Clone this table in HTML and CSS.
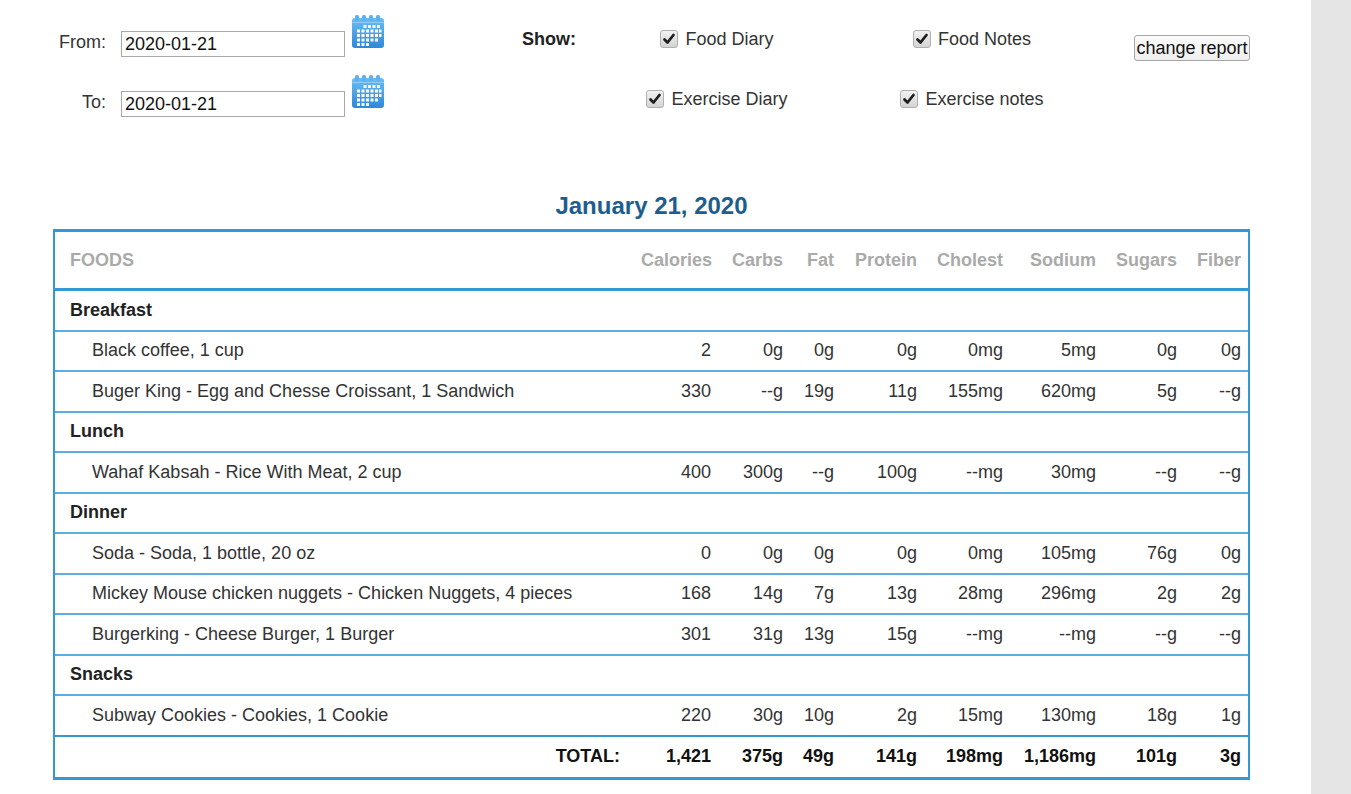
FILE: index.html
```html
<!DOCTYPE html>
<html>
<head>
<meta charset="utf-8">
<title>Food Report</title>
<link rel="stylesheet" href="styles.css">
</head>
<body>
<div class="page">
  <main class="main">
    <form class="filters">
      <label class="lbl">From:</label>
      <div class="datecell">
        <input class="date" type="text" value="2020-01-21">
        <svg class="cal" viewBox="0 0 34 35" width="34" height="35">
          <defs>
            <linearGradient id="cg" x1="0" y1="0" x2="0" y2="1">
              <stop offset="0" stop-color="#6cbdf3"/>
              <stop offset="1" stop-color="#2d88d8"/>
            </linearGradient>
          </defs>
          <rect x="1" y="4" width="32" height="30" rx="3" fill="url(#cg)"/>
          <rect x="4" y="1" width="4" height="6" rx="1.5" fill="#5cb1ee"/>
          <rect x="11" y="1" width="4" height="6" rx="1.5" fill="#5cb1ee"/>
          <rect x="18" y="1" width="4" height="6" rx="1.5" fill="#5cb1ee"/>
          <rect x="25" y="1" width="4" height="6" rx="1.5" fill="#5cb1ee"/>
          <rect x="1" y="8" width="32" height="1" fill="#8fcdf6"/>
          <g fill="#ffffff">
            <rect x="17" y="11" width="3" height="3"/><rect x="21.5" y="11" width="3" height="3"/><rect x="26" y="11" width="3" height="3"/><rect x="12.5" y="11" width="3" height="3"/>
            <rect x="6" y="15.5" width="3" height="3"/><rect x="10.5" y="15.5" width="3" height="3"/><rect x="15" y="15.5" width="3" height="3"/><rect x="19.5" y="15.5" width="3" height="3"/><rect x="24" y="15.5" width="3" height="3"/><rect x="28" y="15.5" width="2.5" height="3"/>
            <rect x="6" y="20" width="3" height="3"/><rect x="10.5" y="20" width="3" height="3"/><rect x="15" y="20" width="3" height="3"/><rect x="19.5" y="20" width="3" height="3"/><rect x="24" y="20" width="3" height="3"/><rect x="28" y="20" width="2.5" height="3"/>
            <rect x="6" y="24.5" width="3" height="3"/><rect x="10.5" y="24.5" width="3" height="3"/><rect x="15" y="24.5" width="3" height="3"/><rect x="19.5" y="24.5" width="3" height="3"/><rect x="24" y="24.5" width="3" height="3"/>
            <rect x="6" y="29" width="3" height="3"/><rect x="10.5" y="29" width="3" height="3"/><rect x="15" y="29" width="3" height="3"/>
          </g>
        </svg>
      </div>
      <div class="show">Show:</div>
      <div class="chk"><span class="box"><svg viewBox="0 0 18 18" width="18" height="18"><path d="M4.5 9.5 L7.5 12.5 L13.5 5" fill="none" stroke="#1e1e1e" stroke-width="2.8" stroke-linecap="round" stroke-linejoin="round"/></svg></span>Food Diary</div>
      <div class="chk"><span class="box"><svg viewBox="0 0 18 18" width="18" height="18"><path d="M4.5 9.5 L7.5 12.5 L13.5 5" fill="none" stroke="#1e1e1e" stroke-width="2.8" stroke-linecap="round" stroke-linejoin="round"/></svg></span>Food Notes</div>
      <div class="btncell"><button type="button" class="btn">change report</button></div>

      <label class="lbl">To:</label>
      <div class="datecell">
        <input class="date" type="text" value="2020-01-21">
        <svg class="cal" viewBox="0 0 34 35" width="34" height="35">
          <rect x="1" y="4" width="32" height="30" rx="3" fill="url(#cg)"/>
          <rect x="4" y="1" width="4" height="6" rx="1.5" fill="#5cb1ee"/>
          <rect x="11" y="1" width="4" height="6" rx="1.5" fill="#5cb1ee"/>
          <rect x="18" y="1" width="4" height="6" rx="1.5" fill="#5cb1ee"/>
          <rect x="25" y="1" width="4" height="6" rx="1.5" fill="#5cb1ee"/>
          <rect x="1" y="8" width="32" height="1" fill="#8fcdf6"/>
          <g fill="#ffffff">
            <rect x="17" y="11" width="3" height="3"/><rect x="21.5" y="11" width="3" height="3"/><rect x="26" y="11" width="3" height="3"/><rect x="12.5" y="11" width="3" height="3"/>
            <rect x="6" y="15.5" width="3" height="3"/><rect x="10.5" y="15.5" width="3" height="3"/><rect x="15" y="15.5" width="3" height="3"/><rect x="19.5" y="15.5" width="3" height="3"/><rect x="24" y="15.5" width="3" height="3"/><rect x="28" y="15.5" width="2.5" height="3"/>
            <rect x="6" y="20" width="3" height="3"/><rect x="10.5" y="20" width="3" height="3"/><rect x="15" y="20" width="3" height="3"/><rect x="19.5" y="20" width="3" height="3"/><rect x="24" y="20" width="3" height="3"/><rect x="28" y="20" width="2.5" height="3"/>
            <rect x="6" y="24.5" width="3" height="3"/><rect x="10.5" y="24.5" width="3" height="3"/><rect x="15" y="24.5" width="3" height="3"/><rect x="19.5" y="24.5" width="3" height="3"/><rect x="24" y="24.5" width="3" height="3"/>
            <rect x="6" y="29" width="3" height="3"/><rect x="10.5" y="29" width="3" height="3"/><rect x="15" y="29" width="3" height="3"/>
          </g>
        </svg>
      </div>
      <div class="show"></div>
      <div class="chk"><span class="box"><svg viewBox="0 0 18 18" width="18" height="18"><path d="M4.5 9.5 L7.5 12.5 L13.5 5" fill="none" stroke="#1e1e1e" stroke-width="2.8" stroke-linecap="round" stroke-linejoin="round"/></svg></span>Exercise Diary</div>
      <div class="chk"><span class="box"><svg viewBox="0 0 18 18" width="18" height="18"><path d="M4.5 9.5 L7.5 12.5 L13.5 5" fill="none" stroke="#1e1e1e" stroke-width="2.8" stroke-linecap="round" stroke-linejoin="round"/></svg></span>Exercise notes</div>
      <div class="btncell"></div>
    </form>

    <section class="report">
      <h2 class="date-title">January 21, 2020</h2>
      <table class="foods">
        <colgroup>
          <col class="c-food"><col class="c-cal"><col class="c-carb"><col class="c-fat"><col class="c-prot"><col class="c-chol"><col class="c-sod"><col class="c-sug"><col class="c-fib">
        </colgroup>
        <thead>
          <tr><th class="first">FOODS</th><th>Calories</th><th>Carbs</th><th>Fat</th><th>Protein</th><th>Cholest</th><th>Sodium</th><th>Sugars</th><th>Fiber</th></tr>
        </thead>
        <tbody>
          <tr class="meal"><td class="first">Breakfast</td><td></td><td></td><td></td><td></td><td></td><td></td><td></td><td></td></tr>
          <tr><td class="item">Black coffee, 1 cup</td><td>2</td><td>0g</td><td>0g</td><td>0g</td><td>0mg</td><td>5mg</td><td>0g</td><td>0g</td></tr>
          <tr><td class="item">Buger King - Egg and Chesse Croissant, 1 Sandwich</td><td>330</td><td>--g</td><td>19g</td><td>11g</td><td>155mg</td><td>620mg</td><td>5g</td><td>--g</td></tr>
          <tr class="meal"><td class="first">Lunch</td><td></td><td></td><td></td><td></td><td></td><td></td><td></td><td></td></tr>
          <tr><td class="item">Wahaf Kabsah - Rice With Meat, 2 cup</td><td>400</td><td>300g</td><td>--g</td><td>100g</td><td>--mg</td><td>30mg</td><td>--g</td><td>--g</td></tr>
          <tr class="meal"><td class="first">Dinner</td><td></td><td></td><td></td><td></td><td></td><td></td><td></td><td></td></tr>
          <tr><td class="item">Soda - Soda, 1 bottle, 20 oz</td><td>0</td><td>0g</td><td>0g</td><td>0g</td><td>0mg</td><td>105mg</td><td>76g</td><td>0g</td></tr>
          <tr><td class="item">Mickey Mouse chicken nuggets - Chicken Nuggets, 4 pieces</td><td>168</td><td>14g</td><td>7g</td><td>13g</td><td>28mg</td><td>296mg</td><td>2g</td><td>2g</td></tr>
          <tr><td class="item">Burgerking - Cheese Burger, 1 Burger</td><td>301</td><td>31g</td><td>13g</td><td>15g</td><td>--mg</td><td>--mg</td><td>--g</td><td>--g</td></tr>
          <tr class="meal"><td class="first">Snacks</td><td></td><td></td><td></td><td></td><td></td><td></td><td></td><td></td></tr>
          <tr><td class="item">Subway Cookies - Cookies, 1 Cookie</td><td>220</td><td>30g</td><td>10g</td><td>2g</td><td>15mg</td><td>130mg</td><td>18g</td><td>1g</td></tr>
        </tbody>
        <tfoot>
          <tr class="total"><td class="total-label">TOTAL:</td><td>1,421</td><td>375g</td><td>49g</td><td>141g</td><td>198mg</td><td>1,186mg</td><td>101g</td><td>3g</td></tr>
        </tfoot>
      </table>
    </section>
  </main>
  <aside class="side"></aside>
</div>
</body>
</html>
```

FILE: styles.css
```css
* { box-sizing: border-box; }

html, body {
  margin: 0;
  padding: 0;
  background: #ffffff;
}

body {
  font-family: "Liberation Sans", Arial, sans-serif;
  font-size: 18px;
  color: #333333;
}

.page {
  display: flex;
  min-height: 794px;
}

.main {
  width: 1311px;
  flex: none;
  padding-top: 14px;
}

.side {
  flex: 1;
  background: #e5e5e5;
}

/* filter form */
.filters {
  display: grid;
  grid-template-columns: 106px 416px 68px 254px 256px 160px;
  grid-template-rows: 60px 60px;
  align-items: start;
}

.lbl {
  text-align: right;
  line-height: 22px;
  padding-top: 17px;
  color: #333;
}

.datecell {
  display: flex;
  align-items: flex-start;
}

.date {
  margin: 17px 0 0 15px;
  width: 224px;
  height: 26px;
  border: 1px solid #a9a9a9;
  padding: 0 3px;
  font-family: "Liberation Sans", Arial, sans-serif;
  font-size: 18px;
  color: #111;
  background: #fff;
}

.cal {
  display: block;
  margin-left: 6px;
}

.show {
  font-weight: bold;
  line-height: 22px;
  padding-top: 14px;
  color: #222;
}

.chk {
  display: flex;
  justify-content: center;
  align-items: center;
  gap: 7px;
  padding-top: 14px;
  line-height: 22px;
  color: #333;
}

.box {
  width: 18px;
  height: 18px;
  border: 1px solid #b0b0b0;
  border-radius: 3px;
  background: linear-gradient(#f2f2f2, #d4d4d4);
  display: flex;
  align-items: center;
  justify-content: center;
  overflow: hidden;
}

.box svg { display: block; flex: none; }

.btncell {
  padding: 21px 0 0 34px;
}

.btn {
  width: 116px;
  height: 26px;
  padding: 0;
  border: 1px solid #a6a6a6;
  border-radius: 3px;
  background: linear-gradient(#fbfbfb, #efefef);
  font-family: "Liberation Sans", Arial, sans-serif;
  font-size: 18px;
  color: #111;
}

/* report */
.report {
  margin: 58px 0 0 53px;
  width: 1197px;
}

.date-title {
  margin: 0 0 9px;
  text-align: center;
  font-size: 24px;
  line-height: 28px;
  font-weight: bold;
  color: #1e5e8e;
}

.foods {
  width: 1197px;
  table-layout: fixed;
  border-collapse: separate;
  border-spacing: 0;
  border: 2px solid #3399d4;
  border-top-width: 3px;
  border-bottom-width: 3px;
}

.c-food { width: 579px; }
.c-cal { width: 84px; }
.c-carb { width: 72px; }
.c-fat { width: 51px; }
.c-prot { width: 83px; }
.c-chol { width: 86px; }
.c-sod { width: 93px; }
.c-sug { width: 81px; }
.c-fib { width: 64px; }

.foods th,
.foods td {
  padding: 0 7px;
  text-align: right;
  white-space: nowrap;
}

.foods th {
  height: 59px;
  color: #aaaaaa;
  font-weight: bold;
  border-bottom: 3px solid #3399d4;
}

.foods td {
  height: 40.5px;
  border-bottom: 2px solid #5aaee0;
  color: #333;
}

.foods tbody tr:last-child td {
  border-bottom-color: #3399d4;
}

.foods tfoot td {
  border-bottom: none;
  font-weight: bold;
  color: #111;
  height: 40px;
}

.foods .first {
  text-align: left;
  padding-left: 15px;
}

.meal td {
  font-weight: bold;
  color: #222;
}

.foods .item {
  text-align: left;
  padding-left: 37px;
}

.foods .total-label {
  padding-right: 14px;
}
```
